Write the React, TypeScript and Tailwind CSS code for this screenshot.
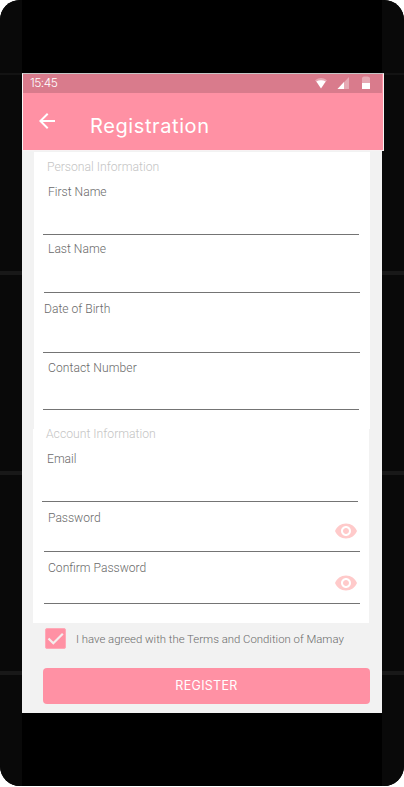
import React from "react";

function Eye({ className }: { className: string }) {
  return (
    <svg viewBox="0 0 24 24" className={`size-6 shrink-0 fill-[#ffcaca] ${className}`}>
      <path d="M12 4.5C7 4.5 2.73 7.61 1 12c1.73 4.39 6 7.5 11 7.5s9.27-3.11 11-7.5c-1.73-4.39-6-7.5-11-7.5zM12 17c-2.76 0-5-2.24-5-5s2.24-5 5-5 5 2.24 5 5-2.24 5-5 5zm0-8c-1.66 0-3 1.34-3 3s1.34 3 3 3 3-1.34 3-3-1.34-3-3-3z" />
    </svg>
  );
}

type FieldProps = { label: string; box: string; text: string; eye?: string };

function Field({ label, box, text, eye }: FieldProps) {
  return (
    <label
      className={`flex w-[316px] items-start justify-between border-b border-[#747474] text-[12.1px] leading-4 text-[#6a6a6a] ${box}`}
    >
      <span className={`whitespace-nowrap ${text}`}>{label}</span>
      {eye && <Eye className={eye} />}
    </label>
  );
}

function Rail() {
  return (
    <div className="flex w-[22px] shrink-0 flex-col bg-[#090909]">
      <div className="mt-[73px] h-0.5 bg-[#131313]" />
      <div className="mt-[196px] h-1 bg-[#181818]" />
      <div className="mt-[196px] h-1 bg-[#181818]" />
      <div className="mt-[196px] h-1 bg-[#181818]" />
    </div>
  );
}

function StatusIcons() {
  return (
    <svg viewBox="0 0 60 18" className="mr-[7px] h-[18px] w-[60px] fill-white">
      <path fillOpacity=".35" d="M0 5.300Q6 .7 12 5.300L10 7.500H2z" />
      <path d="M1.300 6.500Q6 3.800 10.700 6.500L6 13.500z" />
      <path fillOpacity=".35" d="M34 2v12H22.500z" />
      <path d="M29 7v7h-6.500z" />
      <path fillOpacity=".35" d="M47 3Q47.500 1.500 49 1.500h3.500Q54.500 1.500 55 3V8h-8z" />
      <path d="M47 8h8v6h-8z" />
    </svg>
  );
}

export default function App() {
  return (
    <div className="h-[787px] w-[404px] bg-white font-['Roboto','Liberation_Sans',sans-serif] font-light">
      <div className="flex h-[786px] overflow-hidden rounded-[20px] bg-black">
        <Rail />
        <main className="flex w-[360px] shrink-0 flex-col pt-[73px]">
          <header className="relative z-10 h-[78px] w-[362px] border border-[#f7f2f3] border-t-[#c5c5c5] bg-[#ff91a4] text-white">
            <div className="flex h-[19px] w-[359px] items-center justify-between bg-[#d97b8c] pl-[7px] font-['Inter',sans-serif] text-xs font-light tracking-[-0.5px]">
              <span className="-mt-px">15:45</span>
              <StatusIcons />
            </div>
            <div className="flex h-[57px] items-start">
              <svg viewBox="0 0 24 24" className="mt-4 ml-3 size-6 fill-white">
                <path d="M20 11H7.830l5.590-5.590L12 4l-8 8 8 8 1.410-1.410L7.830 13H20v-2z" />
              </svg>
              <h1 className="mt-[19px] ml-[31px] font-['Inter',sans-serif] text-xl leading-7 font-normal tracking-[0.6px]">
                Registration
              </h1>
            </div>
          </header>
          <div className="flex h-[562px] flex-col bg-[#f2f2f2] pt-px">
            <section className="ml-3 h-[277px] w-[336px] shrink-0 bg-white">
              <h2 className="h-7 pt-[7px] pl-[13px] text-[12.2px] leading-4 text-[#c4c4c4]">Personal Information</h2>
              <Field label="First Name" box="ml-[9px] h-[55px]" text="pt-1 pl-[5px]" />
              <Field label="Last Name" box="ml-[10px] h-[58px]" text="pt-1.5 pl-1" />
              <Field label="Date of Birth" box="ml-[9px] h-[60px] w-[317px]" text="pt-2 pl-px" />
              <Field label="Contact Number" box="ml-[9px] h-[57px]" text="pt-[7px] pl-[5px] tracking-[0.08px]" />
            </section>
            <section className="ml-[11px] h-[194px] w-[336px] shrink-0 bg-white">
              <h2 className="h-[22px] pl-[13px] text-[12.2px] leading-[10px] text-[#c4c4c4]">Account Information</h2>
              <Field label="Email" box="ml-[9px] h-[51px]" text="pl-[5px]" />
              <Field label="Password" box="ml-[11px] h-[50px]" text="pt-2 pl-1" eye="mt-[17px] mr-0.5" />
              <Field label="Confirm Password" box="ml-[11px] h-[52px]" text="pt-2 pl-1" eye="mt-[19px] mr-0.5" />
            </section>
            <div className="ml-[23px] flex h-[45px] items-start pt-[5px]">
              <span className="size-[21px] rounded-[2px] border border-[#ffa9b7] bg-[#ff91a4]">
                <svg viewBox="0 0 19 19" className="size-[19px] fill-none stroke-[#f5eeee]" strokeWidth="2.200">
                  <path d="M2.500 9.500l4.800 4.800L16.800 4.800" />
                </svg>
              </span>
              <span className="ml-2.5 pt-[3px] text-[11.375px] leading-4 whitespace-nowrap text-[#6a6a6a]">
                I have agreed with the Terms and Condition of Mamay
              </span>
            </div>
            <button className="ml-[21px] h-9 w-[327px] shrink-0 rounded bg-[#ff91a4] font-['Inter',sans-serif] text-[12.5px] font-normal tracking-[0.3px] text-white">
              REGISTER
            </button>
          </div>
        </main>
        <Rail />
      </div>
    </div>
  );
}
